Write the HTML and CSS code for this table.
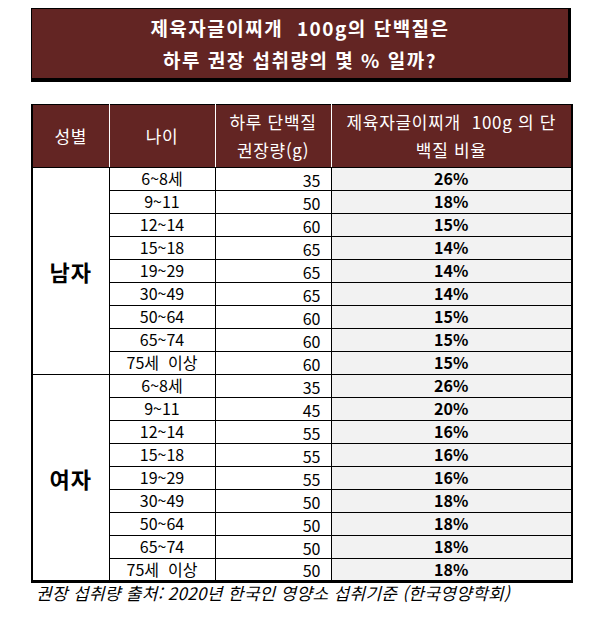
FILE: index.html
```html
<!DOCTYPE html>
<html lang="ko">
<head>
<meta charset="utf-8">
<title>제육자글이찌개 단백질</title>
<link rel="stylesheet" href="styles.css">
</head>
<body>
<div class="title">
  <p>제육자글이찌개&nbsp; 100g의 단백질은</p>
  <p>하루 권장 섭취량의 몇 % 일까?</p>
</div>
<table class="tbl">
  <colgroup>
    <col class="c1"><col class="c2"><col class="c3"><col class="c4">
  </colgroup>
  <thead>
    <tr>
      <th>성별</th>
      <th>나이</th>
      <th>하루 단백질<br>권장량(g)</th>
      <th>제육자글이찌개&nbsp; 100g 의 단<br>백질 비율</th>
    </tr>
  </thead>
  <tbody>
    <tr><td class="sex" rowspan="9">남자</td><td class="age">6~8세</td><td class="amt">35</td><td class="pct">26%</td></tr>
    <tr><td class="age">9~11</td><td class="amt">50</td><td class="pct">18%</td></tr>
    <tr><td class="age">12~14</td><td class="amt">60</td><td class="pct">15%</td></tr>
    <tr><td class="age">15~18</td><td class="amt">65</td><td class="pct">14%</td></tr>
    <tr><td class="age">19~29</td><td class="amt">65</td><td class="pct">14%</td></tr>
    <tr><td class="age">30~49</td><td class="amt">65</td><td class="pct">14%</td></tr>
    <tr><td class="age">50~64</td><td class="amt">60</td><td class="pct">15%</td></tr>
    <tr><td class="age">65~74</td><td class="amt">60</td><td class="pct">15%</td></tr>
    <tr><td class="age">75세&nbsp; 이상</td><td class="amt">60</td><td class="pct">15%</td></tr>
    <tr><td class="sex" rowspan="9">여자</td><td class="age">6~8세</td><td class="amt">35</td><td class="pct">26%</td></tr>
    <tr><td class="age">9~11</td><td class="amt">45</td><td class="pct">20%</td></tr>
    <tr><td class="age">12~14</td><td class="amt">55</td><td class="pct">16%</td></tr>
    <tr><td class="age">15~18</td><td class="amt">55</td><td class="pct">16%</td></tr>
    <tr><td class="age">19~29</td><td class="amt">55</td><td class="pct">16%</td></tr>
    <tr><td class="age">30~49</td><td class="amt">50</td><td class="pct">18%</td></tr>
    <tr><td class="age">50~64</td><td class="amt">50</td><td class="pct">18%</td></tr>
    <tr><td class="age">65~74</td><td class="amt">50</td><td class="pct">18%</td></tr>
    <tr><td class="age">75세&nbsp; 이상</td><td class="amt">50</td><td class="pct">18%</td></tr>
  </tbody>
</table>
<p class="source">권장 섭취량 출처: 2020년 한국인 영양소 섭취기준 (한국영양학회)</p>
</body>
</html>
```
FILE: styles.css
```css
html, body {
  margin: 0;
  padding: 0;
  background: #ffffff;
}
body {
  font-family: "Noto Sans CJK KR", "Noto Sans", sans-serif;
  color: #000;
}
.title {
  margin: 8px 0 0 31px;
  width: 536px;
  height: 69px;
  padding: 0;
  background: #632523;
  border-style: solid;
  border-color: #000;
  border-width: 1px 3px 4px 1px;
  color: #fff;
  font-weight: bold;
  font-size: 19px;
  letter-spacing: 1.5px;
  text-align: center;
  display: flex;
  flex-direction: column;
  justify-content: center;
}
.title p {
  margin: 0;
  line-height: 32px;
}
.tbl {
  margin: 22px 0 0 31px;
  width: 540px;
  table-layout: fixed;
  border-collapse: collapse;
  border-left: 2px solid #000;
  border-right: 2px solid #000;
  border-bottom: 3px solid #000;
}
.c1 { width: 77px; }
.c2 { width: 106px; }
.c3 { width: 116px; }
.c4 { width: 241px; }
.tbl th {
  background: #632523;
  color: #fff;
  font-weight: normal;
  font-size: 17px;
  letter-spacing: 0.7px;
  line-height: 28px;
  height: 62px;
  padding: 0;
  border-top: 1px solid #000;
  border-bottom: 1px solid #000;
  border-left: 1px solid #fff;
  border-right: 1px solid #fff;
  text-align: center;
  vertical-align: middle;
}
.tbl th:first-child { border-left: 2px solid #000; }
.tbl th:last-child { border-right: 2px solid #000; }
.tbl tbody tr {
  height: 23px;
}
.tbl td {
  border: 1px solid #000;
  padding: 0;
  font-size: 16px;
  line-height: 20px;
  height: 21px;
  overflow: hidden;
}
.tbl td.sex {
  font-size: 22px;
  font-weight: bold;
  text-align: center;
  vertical-align: middle;
  letter-spacing: 1px;
}
.tbl td.age {
  text-align: center;
  vertical-align: top;
}
.tbl td.amt {
  text-align: right;
  padding-right: 10px;
  vertical-align: bottom;
}
.tbl td.pct {
  background: #f2f2f2;
  text-align: center;
  font-weight: bold;
  vertical-align: top;
}
.source {
  margin: 0 0 0 36px;
  font-size: 17px;
  font-style: italic;
  line-height: 20px;
  letter-spacing: 0.3px;
}
```
